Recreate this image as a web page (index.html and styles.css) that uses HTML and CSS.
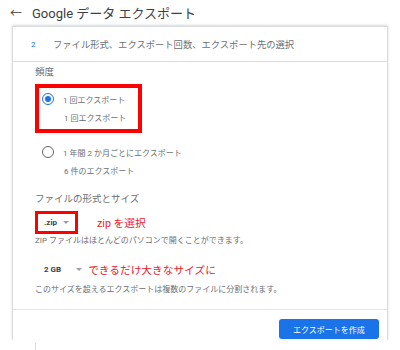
FILE: index.html
```html
<!DOCTYPE html>
<html lang="ja">
<head>
    <meta charset="UTF-8">
    <title>Google データ エクスポート</title>
    <link rel="stylesheet" href="styles.css">
</head>
<body>
    <div class="header">
        <span class="back">&larr;</span>
        <span class="title">Google データ エクスポート</span>
    </div>

    <div class="card">
        <div class="step">
            <span class="step-num">2</span>
            <span class="step-title">ファイル形式、エクスポート回数、エクスポート先の選択</span>
        </div>

        <div class="content">
            <div class="label">頻度</div>

            <div class="option marked">
                <div class="option-row">
                    <span class="radio checked"></span>
                    <span>1 回エクスポート</span>
                </div>
                <div class="option-sub">1 回エクスポート</div>
            </div>

            <div class="option second">
                <div class="option-row">
                    <span class="radio"></span>
                    <span>1 年間 2 か月ごとにエクスポート</span>
                </div>
                <div class="option-sub">6 件のエクスポート</div>
            </div>

            <div class="label file-label">ファイルの形式とサイズ</div>

            <div class="select-row">
                <div class="select marked">.zip <span class="caret"></span></div>
                <span class="note zip-note">zip を選択</span>
            </div>
            <div class="hint">ZIP ファイルはほとんどのパソコンで開くことができます。</div>

            <div class="select-row size-row">
                <div class="select">2 GB <span class="caret wide"></span></div>
                <span class="note size-note">できるだけ大きなサイズに</span>
            </div>
            <div class="hint">このサイズを超えるエクスポートは複数のファイルに分割されます。</div>
        </div>

        <div class="footer">
            <button class="export-button">エクスポートを作成</button>
        </div>
    </div>

    <div class="next-line"></div>
</body>
</html>
```

FILE: styles.css
```css
* {
    margin: 0;
    padding: 0;
    box-sizing: border-box;
}

body {
    background: #fff;
    font-family: Roboto, "Noto Sans CJK JP", sans-serif;
    color: #6b6f74;
    width: 400px;
    height: 350px;
    overflow: hidden;
}

.header {
    height: 26px;
    display: flex;
    align-items: center;
    padding-left: 10px;
    padding-bottom: 2px;
    color: #3c4043;
}

.back {
    font-size: 12px;
    width: 22px;
}

.title {
    font-size: 13px;
}

.card {
    margin: 0 12px 0 12px;
    width: 376px;
    border: 1px solid #dadce0;
    border-bottom: none;
    box-shadow: 0 -1px 2px rgba(60, 64, 67, 0.2);
}

.step {
    height: 35px;
    display: flex;
    align-items: center;
    border-bottom: 1px solid #dadce0;
    font-size: 9.3px;
}

.step-num {
    color: #1a73e8;
    font-size: 8px;
    width: 40px;
    padding-left: 18px;
}

.content {
    padding: 3px 0 13px 22px;
    border-bottom: 1px solid #e3e6ea;
}

.label {
    font-size: 9.5px;
    line-height: 14px;
    margin-bottom: 5px;
}

.option {
    width: fit-content;
    border: 4px solid transparent;
    padding: 0 10px 2px 3px;
    font-size: 8px;
}

.option.marked {
    border-color: #ff0000;
    width: 107px;
}

.option.second {
    margin-top: 4px;
}

.option-row {
    display: flex;
    align-items: center;
    gap: 9px;
    height: 22px;
}

.option-sub {
    line-height: 16px;
    padding-left: 22px;
    padding-top: 1px;
}

.radio {
    width: 12px;
    height: 12px;
    border-radius: 50%;
    border: 1.5px solid #5f6368;
    display: flex;
    align-items: center;
    justify-content: center;
}

.radio.checked {
    border: 1.5px solid #1a73e8;
}

.radio.checked::after {
    content: "";
    width: 6px;
    height: 6px;
    border-radius: 50%;
    background: #1a73e8;
}

.file-label {
    margin-top: 6px;
    margin-bottom: 5px;
}

.select-row {
    display: flex;
    align-items: center;
}

.select {
    height: 23px;
    display: flex;
    align-items: center;
    gap: 6px;
    border: 3px solid transparent;
    padding: 0 6px;
    font-size: 8px;
    font-weight: bold;
    color: #3c4043;
}

.select.marked {
    border-color: #ff0000;
    width: 43px;
}

.caret {
    width: 0;
    height: 0;
    border-left: 3px solid transparent;
    border-right: 3px solid transparent;
    border-top: 3px solid #9aa0a6;
}

.caret.wide {
    margin-left: 9px;
}

.note {
    color: #e8202a;
    font-size: 10.7px;
}

.zip-note {
    margin-left: 19px;
}

.size-note {
    margin-left: -3px;
}

.hint {
    font-size: 8px;
    line-height: 12px;
    margin-top: 1px;
}

.size-row {
    margin-top: 11px;
}

.size-row + .hint {
    margin-top: 3px;
}

.footer {
    display: flex;
    justify-content: flex-end;
    padding: 9px 8px 0 0;
    height: 30px;
}

.export-button {
    width: 100px;
    height: 20px;
    background: #1a73e8;
    color: #fff;
    border: none;
    border-radius: 3px;
    font-family: Roboto, "Noto Sans CJK JP", sans-serif;
    font-size: 8px;
}

.next-line {
    margin: 3px 0 0 35px;
    width: 1px;
    height: 12px;
    background: #dadce0;
}
```
